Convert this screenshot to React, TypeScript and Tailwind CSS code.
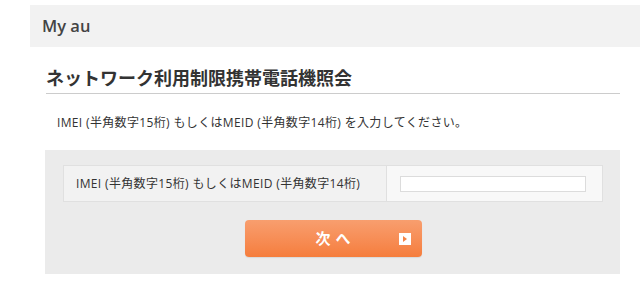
import { useState } from "react"

export default function App() {
  const [imei, setImei] = useState("")

  return (
    <div className="w-[640px] h-[291px] bg-white text-[#333] font-['Open_Sans','Noto_Sans_CJK_JP',sans-serif] overflow-hidden">
      {/* Global header */}
      <div className="ml-[30px] mt-[5px] h-[42px] bg-[#f2f2f2] flex items-center pl-[12px]">
        <span className="font-['Open_Sans','Noto_Sans',sans-serif] text-[16.5px] font-semibold text-[#444] leading-none">My au</span>
      </div>

      <div className="ml-[46px] w-[574px]">
        <h2 className="mt-[17px] pb-[3px] font-['Noto_Sans_CJK_JP',sans-serif] text-[18px] leading-[26px] font-bold text-[#333] border-b border-[#cccccc]">
          ネットワーク利用制限携帯電話機照会
        </h2>
        <p className="mt-[20px] pl-[11px] text-[12px] leading-[18px] tracking-[0.35px]">
          IMEI (半角数字15桁) もしくはMEID (半角数字14桁) を入力してください。
        </p>
      </div>

      {/* Form panel */}
      <div className="ml-[45px] mt-[18px] w-[575px] h-[124px] bg-[#ebebeb] pt-[15px] pl-[18px] pr-[17px]">
        <div className="flex h-[37px] border border-[#e0e0e0]">
          <div className="w-[323px] bg-[#f2f2f2] border-r border-[#e0e0e0] flex items-center pl-[12px] text-[12px] tracking-[0.35px]">
            IMEI (半角数字15桁) もしくはMEID (半角数字14桁)
          </div>
          <div className="flex-1 bg-[#f8f8f8] flex items-center pl-[13px]">
            <input
              value={imei}
              onChange={(e) => setImei(e.target.value)}
              className="w-[186px] h-[16px] bg-white border border-[#dcdcdc] outline-none text-[12px] px-1"
            />
          </div>
        </div>

        <button className="relative mx-auto mt-[18px] flex h-[37px] w-[177px] items-center justify-center rounded-[4px] bg-gradient-to-b from-[#f89e6e] to-[#f57d3c] shadow-[0_1px_1px_rgba(0,0,0,0.08)]">
          <span className="font-['Noto_Sans_CJK_JP',sans-serif] text-[15px] font-bold text-white tracking-[5px] pl-[5px]">次へ</span>
          <span className="absolute right-[11px] top-[13px] h-[12px] w-[12px] bg-white flex items-center justify-center">
            <svg width="4" height="6" viewBox="0 0 4 6">
              <path d="M0 0 L4 3 L0 6 Z" fill="#f58447" />
            </svg>
          </span>
        </button>
      </div>
    </div>
  )
}
